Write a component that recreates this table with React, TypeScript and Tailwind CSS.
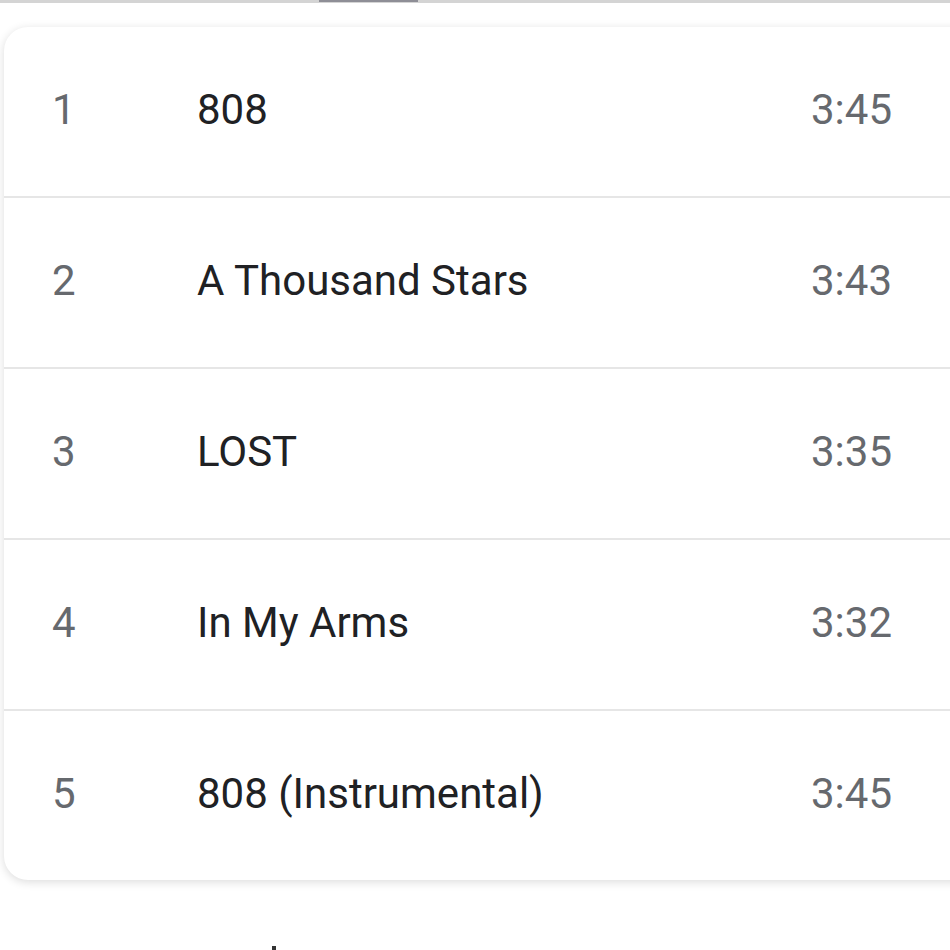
import React from "react";

const tracks = [
  { n: "1", title: "808", dur: "3:45" },
  { n: "2", title: "A Thousand Stars", dur: "3:43" },
  { n: "3", title: "LOST", dur: "3:35" },
  { n: "4", title: "In My Arms", dur: "3:32" },
  { n: "5", title: "808 (Instrumental)", dur: "3:45" },
];

export default function App() {
  return (
    <div
      className="w-[950px] h-[950px] bg-white overflow-hidden"
      style={{ fontFamily: "Roboto, 'Noto Sans', sans-serif" }}
    >
      <div className="h-[3px] bg-[#d4d4d4] flex">
        <div className="ml-[319px] w-[99px] h-[2px] bg-[#8e8e96]" />
      </div>
      <div className="ml-[4px] mt-[24px] w-[1000px] bg-white rounded-[24px] shadow-[0_2px_10px_rgba(0,0,0,0.14)] overflow-hidden">
        {tracks.map((t, i) => (
          <div
            key={t.n}
            className={`flex items-center pl-[48px] pr-[112px] ${
              i < tracks.length - 1
                ? "h-[171px] border-b-2 border-[#e6e6e6]"
                : "h-[169px]"
            }`}
          >
            <div className="w-[145px] text-[42px] leading-none text-[#66696e] pb-[3px]">
              {t.n}
            </div>
            <div className="flex-1 text-[42px] leading-none text-[#202124] pb-[3px]">
              {t.title}
            </div>
            <div className="text-[42px] leading-none text-[#66696e] pb-[3px]">
              {t.dur}
            </div>
          </div>
        ))}
      </div>
      <div className="ml-[272px] mt-[66px] w-[4px] h-[4px] bg-[#333]" />
    </div>
  );
}
